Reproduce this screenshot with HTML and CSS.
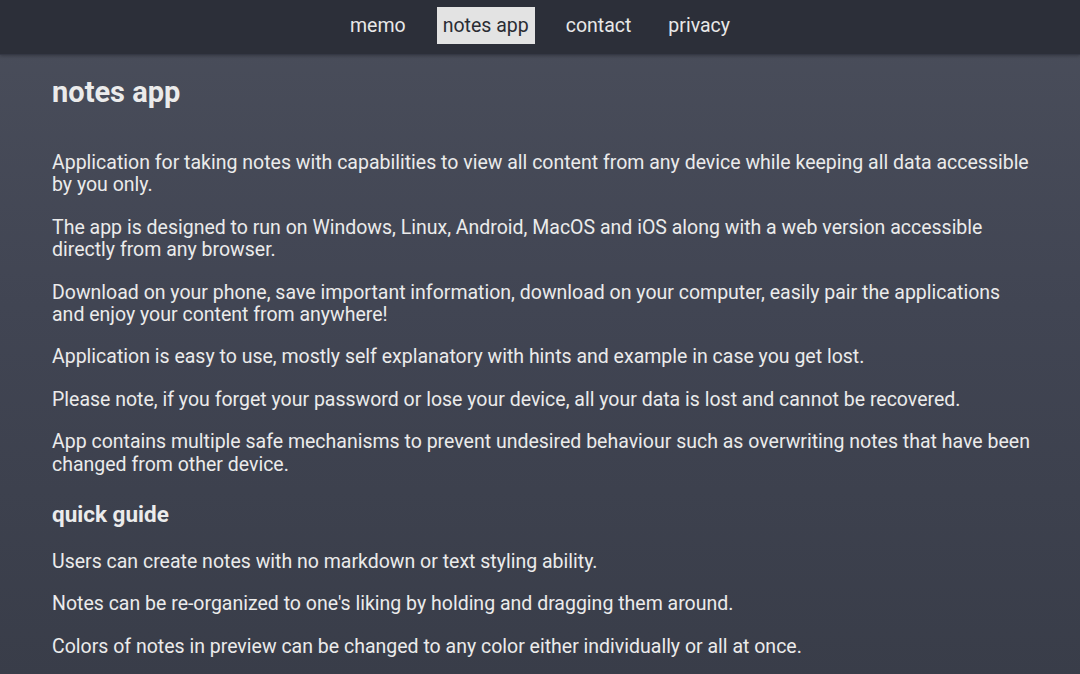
FILE: index.html
```html
<!DOCTYPE HTML>
<html>

<head>
    <meta name="viewport" content="width=device-width, initial-scale=1">
    <title>notes app</title>
    <link rel="stylesheet" href="styles.css">
</head>

<body>
    <div class="topnav">
        <a href="#">memo</a>
        <a href="#" class="active">notes app</a>
        <a href="#">contact</a>
        <a href="#">privacy</a>
    </div>
    <div class="content">
        <h1>notes app</h1>
        <p>Application for taking notes with capabilities to view all content from any device while keeping all data accessible by you only.</p>
        <p>The app is designed to run on Windows, Linux, Android, MacOS and iOS along with a web version accessible directly from any browser.</p>
        <p>Download on your phone, save important information, download on your computer, easily pair the applications and enjoy your content from anywhere!</p>
        <p>Application is easy to use, mostly self explanatory with hints and example in case you get lost.</p>
        <p>Please note, if you forget your password or lose your device, all your data is lost and cannot be recovered.</p>
        <p>App contains multiple safe mechanisms to prevent undesired behaviour such as overwriting notes that have been changed from other device.</p>
        <h2>quick guide</h2>
        <p>Users can create notes with no markdown or text styling ability.</p>
        <p>Notes can be re-organized to one's liking by holding and dragging them around.</p>
        <p>Colors of notes in preview can be changed to any color either individually or all at once.</p>
    </div>
</body>

</html>
```

FILE: styles.css
```css
html {
    font-family: Roboto, "Liberation Sans", Arial, sans-serif;
}

body {
    margin: 0;
    min-height: 100vh;
    color: #ebebeb;
    background: linear-gradient(180deg, #4a4e5b 0%, #414553 45%, #393d49 100%);
}

.topnav {
    display: flex;
    justify-content: center;
    align-items: center;
    gap: 25px;
    height: 50px;
    padding-bottom: 4px;
    background-color: #2c2f39;
    border-bottom: 1px solid #353845;
    box-shadow: 0 1px 3px rgba(0, 0, 0, 0.25);
}

.topnav a {
    font-size: 19.5px;
    color: #e8e8e8;
    text-decoration: none;
    padding: 7px 6px 7px;
}

.topnav a.active {
    background-color: #e3e3e3;
    color: #2a2c33;
}

.content {
    padding: 14px 45px 0 52px;
}

h1 {
    font-size: 29px;
    font-weight: bold;
    margin: 6px 0 43px;
}

h2 {
    font-size: 22.5px;
    font-weight: bold;
    margin: 25px 0 24px;
}

p {
    font-size: 19.5px;
    line-height: 22.3px;
    margin: 0 0 20.2px;
}
```
